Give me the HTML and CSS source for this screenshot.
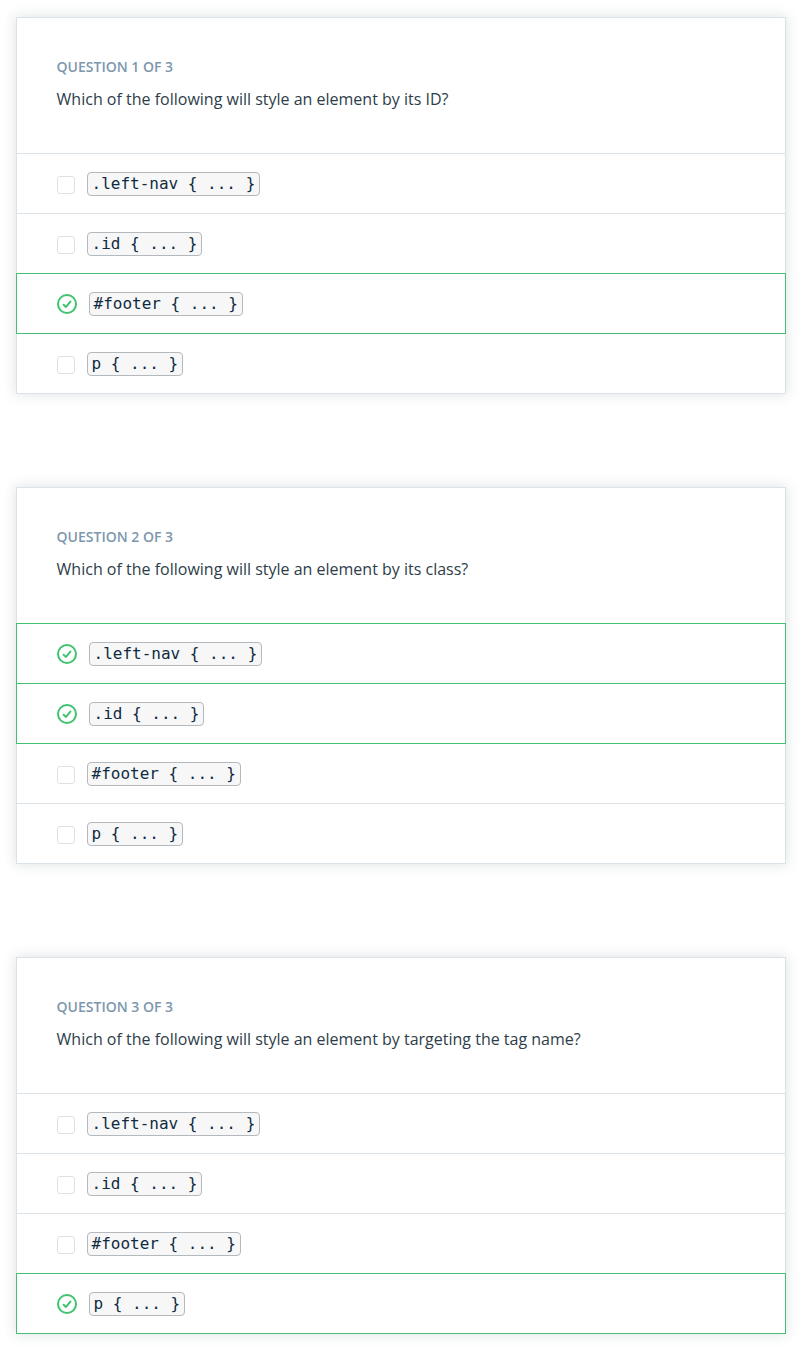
FILE: index.html
```html
<!DOCTYPE html>
<html lang="en">
<head>
<meta charset="utf-8">
<title>Quiz</title>
<link rel="stylesheet" href="styles.css">
</head>
<body>
<svg class="defs" width="0" height="0">
  <symbol id="check" viewBox="0 0 20 20">
    <circle cx="10" cy="10" r="9" fill="none" stroke="currentColor" stroke-width="2"/>
    <path d="M6.6 10.7 9 12.9 13.4 7.6" fill="none" stroke="currentColor" stroke-width="2" stroke-linecap="round" stroke-linejoin="round"/>
  </symbol>
</svg>
<main class="quiz">
  <section class="card">
    <header class="question">
      <h2 class="label">QUESTION 1 OF 3</h2>
      <p class="prompt">Which of the following will style an element by its ID?</p>
    </header>
    <div class="option"><span class="box"></span><code class="code">.left-nav { ... }</code></div>
    <div class="option"><span class="box"></span><code class="code">.id { ... }</code></div>
    <div class="option correct"><svg class="check"><use href="#check"/></svg><code class="code">#footer { ... }</code></div>
    <div class="option"><span class="box"></span><code class="code">p { ... }</code></div>
  </section>
  <section class="card">
    <header class="question">
      <h2 class="label">QUESTION 2 OF 3</h2>
      <p class="prompt">Which of the following will style an element by its class?</p>
    </header>
    <div class="option correct"><svg class="check"><use href="#check"/></svg><code class="code">.left-nav { ... }</code></div>
    <div class="option correct"><svg class="check"><use href="#check"/></svg><code class="code">.id { ... }</code></div>
    <div class="option"><span class="box"></span><code class="code">#footer { ... }</code></div>
    <div class="option"><span class="box"></span><code class="code">p { ... }</code></div>
  </section>
  <section class="card">
    <header class="question">
      <h2 class="label">QUESTION 3 OF 3</h2>
      <p class="prompt">Which of the following will style an element by targeting the tag name?</p>
    </header>
    <div class="option"><span class="box"></span><code class="code">.left-nav { ... }</code></div>
    <div class="option"><span class="box"></span><code class="code">.id { ... }</code></div>
    <div class="option"><span class="box"></span><code class="code">#footer { ... }</code></div>
    <div class="option correct"><svg class="check"><use href="#check"/></svg><code class="code">p { ... }</code></div>
  </section>
</main>
</body>
</html>
```
FILE: styles.css
```css
* { box-sizing: border-box; }
body {
  margin: 0;
  background: #fff;
  font-family: "Open Sans", sans-serif;
  color: #2e3d49;
}
.defs { display: block; }
.quiz {
  display: flex;
  flex-direction: column;
  gap: 93px;
  padding: 17px 13px 13px 16px;
}
.card {
  display: flex;
  flex-direction: column;
  height: 377px;
  background: #fff;
  box-shadow: 0 0 12px 1px rgba(46, 61, 73, 0.14);
}
.question {
  height: 137px;
  padding: 39px 39px 0 39.6px;
  border: 1px solid #dbe2e8;
}
.label {
  margin: 0;
  font-size: 14px;
  line-height: 20px;
  font-weight: 600;
  color: #7d97ad;
}
.prompt {
  margin: 10px 0 0;
  font-size: 16px;
  line-height: 24px;
}
.option {
  display: flex;
  align-items: center;
  flex: none;
  height: 61px;
  margin-top: -1px;
  padding: 0 40px;
  border: 1px solid #dbe2e8;
}
.correct {
  z-index: 1;
  border-color: #43c073;
}
.box {
  width: 18px;
  height: 18px;
  margin: 2px 12px 0 0;
  border: 1px solid #dbe2e8;
  border-radius: 3px;
}
.check {
  width: 20px;
  height: 20px;
  margin-right: 12px;
  color: #40c370;
}
.code {
  height: 24px;
  padding: 0 3.5px;
  border: 1px solid #b4b9bd;
  border-radius: 4px;
  background: #f7f7f8;
  font: 16px/22px "DejaVu Sans Mono", monospace;
  color: #0f2b41;
}
```
